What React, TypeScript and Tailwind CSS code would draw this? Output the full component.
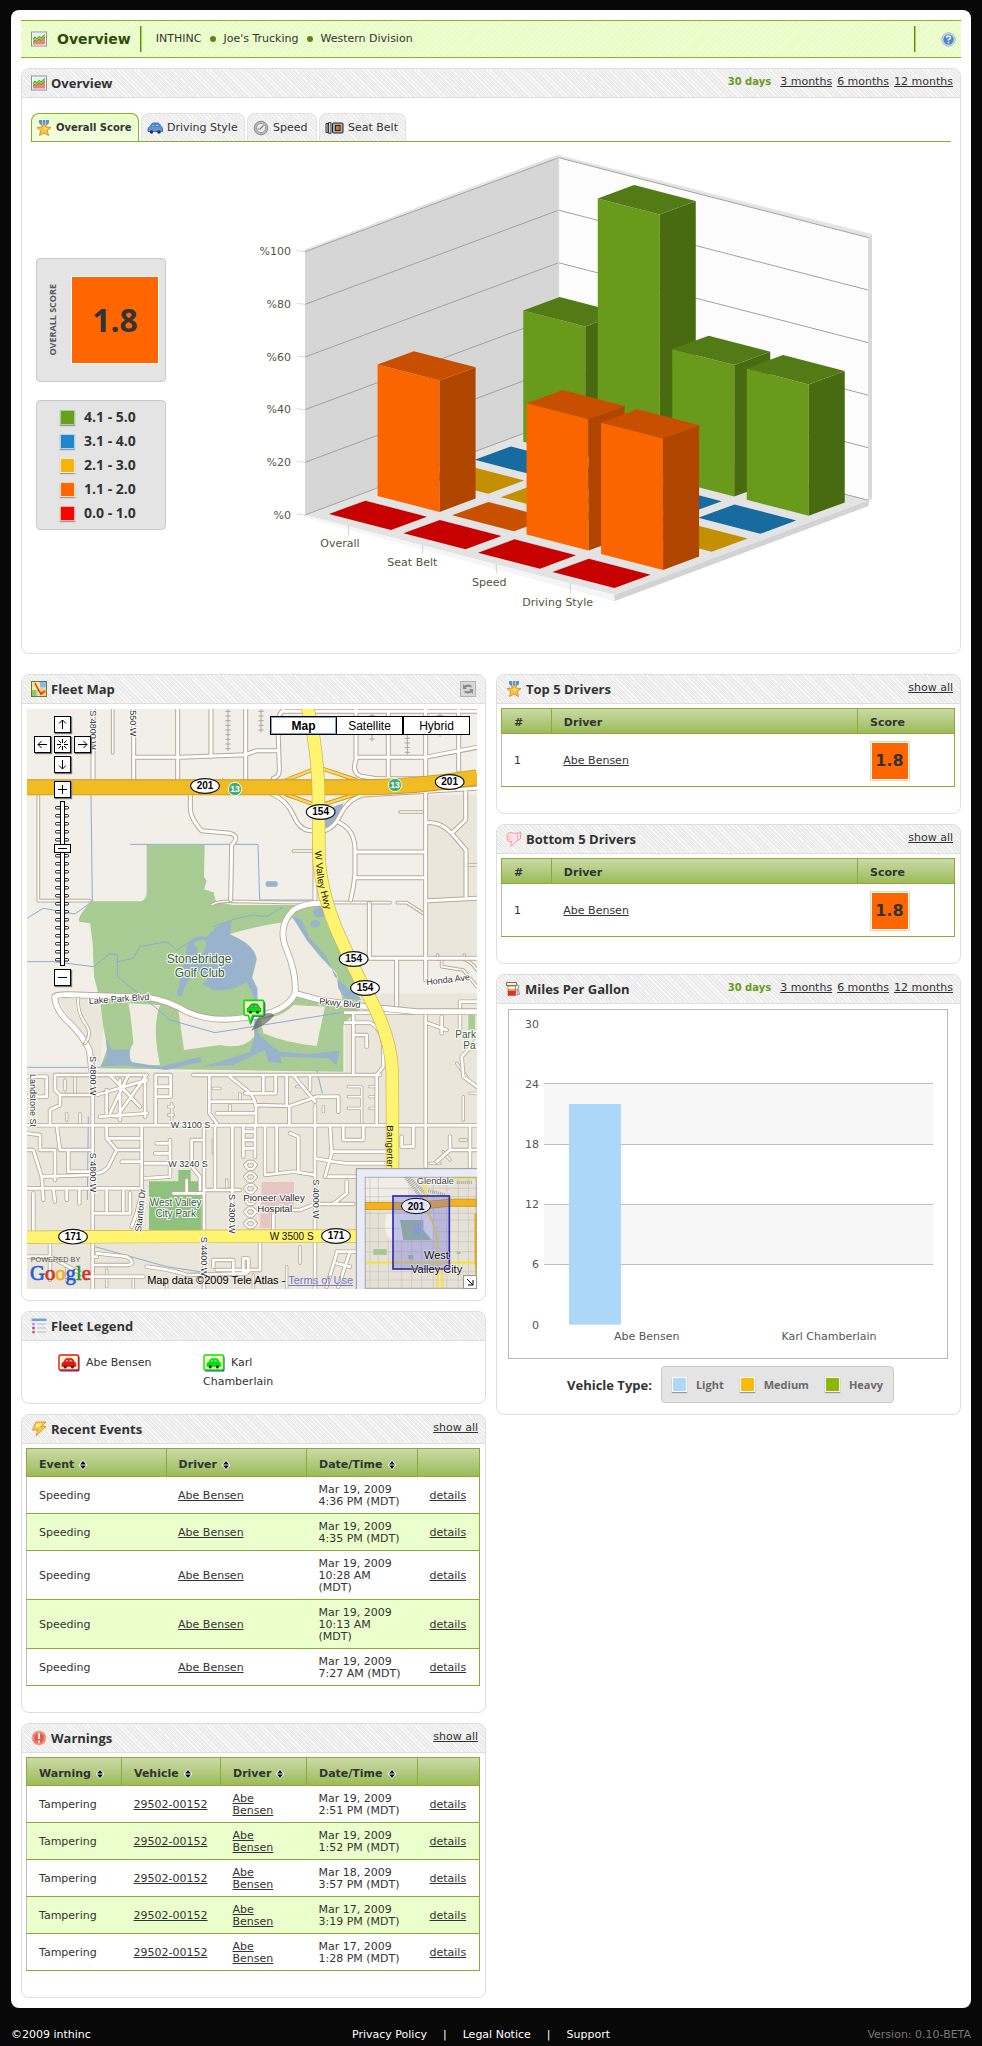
import React from 'react';

/* ---------- icons ---------- */

const TrendIcon = () => (
  <svg width="16" height="16" viewBox="0 0 16 16" aria-hidden="true" className="shrink-0">
    <rect x="0.5" y="1" width="15" height="14" fill="#fff" stroke="#8f8f8f" />
    <rect x="2" y="2.5" width="12" height="11" fill="#dff0fb" />
    <path d="M2 11L4 8.5 6 10 8 7.500 10 9 14 5V13.500H2Z" fill="#f08080" />
    <path d="M2 7.500L4 5.500 6 7 8 5 10 6 14 3V6L10 10 8 8.500 6 11 4 9.500 2 11.500Z" fill="#a9d65c" />
    <path d="M2 8.500L4 6 6 8 8 5.500 10 7 14 3.500M2 11L4 9 6 10.500 8 8 10 9.500 14 6" fill="none" stroke="#5b9a1c" />
  </svg>
);

const MedalIcon = () => (
  <svg width="16" height="16" viewBox="0 0 16 16" aria-hidden="true" className="shrink-0">
    <path d="M3 0h10v3L9.500 6.500h-3L3 3Z" fill="#5b93cf" />
    <path d="M6 0h1v6H6zM9 0h1v6H9z" fill="#b4d2ef" />
    <path d="M8 3l1.900 4L15 7.500 11.300 10.500 12.500 15.500 8 13 3.500 15.500 4.700 10.500 1 7.500 6.100 7Z" fill="#fbc34b" stroke="#d98a1c" strokeWidth="0.900" />
    <path d="M8 5.500l1 2.600 2.500.4L8 10Z" fill="#ffe9a0" />
  </svg>
);

const CarShape = ({ fill, dark }: { fill: string; dark: string }) => (
  <g>
    <path d="M1 8q0-2 2-2.300L4.500 3q.5-1 2-1h4q1.300 0 2 1L14 5.700q1.500.3 1.500 2.300v2.500H1Z" fill={fill} stroke={dark} strokeWidth="0.800" />
    <path d="M4.500 5.500L5.500 3.500H7.500V5.500ZM8.500 3.500H11L12.300 5.500H8.500Z" fill="#8ed0ea" stroke={dark} strokeWidth="0.500" />
    <circle cx="4.500" cy="11" r="1.700" fill="#333" />
    <circle cx="12" cy="11" r="1.700" fill="#333" />
  </g>
);

const CarIcon = () => (
  <svg width="16" height="14" viewBox="0 0 16 14" aria-hidden="true" className="shrink-0">
    <CarShape fill="#5f97da" dark="#2d5d9c" />
  </svg>
);

const GaugeIcon = () => (
  <svg width="16" height="16" viewBox="0 0 16 16" aria-hidden="true" className="shrink-0">
    <circle cx="8" cy="8" r="6.800" fill="#b9b9b9" stroke="#8b8b8b" />
    <circle cx="8" cy="8" r="4.600" fill="#ececec" stroke="#9d9d9d" />
    <path d="M6.500 9.500L10.500 5.500M4.500 9H6" stroke="#7c7c7c" strokeWidth="1.200" />
  </svg>
);

const BeltIcon = () => (
  <svg width="19" height="12" viewBox="0 0 19 12" aria-hidden="true" className="shrink-0">
    <path d="M1 1.500h2v9H1zM3.500 .700h2.500v10.600H3.500z" fill="#d9d9d9" stroke="#333" />
    <rect x="7.500" y="1" width="10.500" height="10" rx="1" fill="#aaa" stroke="#222" />
    <rect x="10.500" y="3.500" width="4.500" height="5" fill="#e0701c" stroke="#222" />
  </svg>
);

const HelpIcon = () => (
  <svg width="15" height="15" viewBox="0 0 15 15" aria-hidden="true">
    <circle cx="7.500" cy="7.500" r="6.700" fill="#dbe7f5" stroke="#9db6d6" />
    <circle cx="7.500" cy="7.500" r="5.200" fill="#4f86c6" />
    <path d="M5.500 6q.1-2 2-2t2 1.800Q9.400 7 7.500 7.600V8.600M7.500 9.800v1.400" fill="none" stroke="#fff" strokeWidth="1.500" />
  </svg>
);

const MapIcon = () => (
  <svg width="16" height="16" viewBox="0 0 16 16" aria-hidden="true" className="shrink-0">
    <rect x="0.500" y="0.500" width="15" height="15" fill="#f6e58a" stroke="#5f7a4c" />
    <path d="M9 1h6v7h-6z" fill="#8fb8e8" />
    <path d="M1 9h6v6H1z" fill="#8fc46a" />
    <path d="M9 9l6-3v9H9z" fill="#f9cf5c" />
    <path d="M6 1V15M1 7H15" stroke="#fff" strokeWidth="0.700" />
    <path d="M4 2L7 8 10 13 14 10" fill="none" stroke="#dd3b22" strokeWidth="1.600" />
  </svg>
);

const RefreshIcon = () => (
  <svg width="16" height="16" viewBox="0 0 16 16" aria-hidden="true">
    <rect x="0.500" y="0.500" width="15" height="15" fill="#d8d8d8" stroke="#b4b4b4" />
    <path d="M3 3v5h4L5.500 6.500q3-1.500 6 0V4.500Q8 2.500 4.500 4.500Z" fill="#8b8b8b" />
    <path d="M13 13V8H9l1.500 1.500q-3 1.500-6 0v2q3.500 2 7 0Z" fill="#8b8b8b" />
  </svg>
);

const ThumbDownIcon = () => (
  <svg width="16" height="16" viewBox="0 0 16 16" aria-hidden="true" className="shrink-0">
    <path d="M1 3.500Q2.500 1.500 5 1.500L10 2.500 14.500 1V8L11.500 9.500 9 11.500 6 15Q4 15.500 4.500 13.500L6 10.500H3Q1 10 1.500 8 0.500 6 1 3.500Z" fill="#ffe3e7" stroke="#f59aa7" />
    <path d="M1.500 5.500H4.500M1.500 8H5M11.500 2V9" stroke="#f6a3ae" strokeWidth="0.800" />
  </svg>
);

const GasIcon = () => (
  <svg width="15" height="16" viewBox="0 0 15 16" aria-hidden="true" className="shrink-0">
    <path d="M0.500 1.500h10v3h-10z" fill="#f8efc4" stroke="#6b6350" strokeWidth="0.900" />
    <path d="M2 5h7.500v9.500H2z" fill="#fff" stroke="#8e6a62" strokeWidth="0.700" />
    <path d="M2 8h7.500v6.500H2z" fill="#e2301b" />
    <path d="M2.500 8h6.500v2H2.500z" fill="#ff9a3b" />
    <path d="M10.500 3L13 5.500 12 8 13.500 13 11 14V8" fill="none" stroke="#9a9a9a" strokeWidth="1.100" />
  </svg>
);

const ListIcon = () => (
  <svg width="16" height="16" viewBox="0 0 16 16" aria-hidden="true" className="shrink-0">
    <rect x="0.500" y="0.500" width="15" height="2.500" fill="#6ea3dc" />
    <circle cx="2.500" cy="6" r="1.500" fill="#e77ae2" />
    <circle cx="2.500" cy="10" r="1.500" fill="#8a5be0" />
    <circle cx="2.500" cy="14" r="1.500" fill="#e8574e" />
    <path d="M6 6h9M6 10h9M6 14h9" stroke="#b0b0b0" strokeWidth="0.800" />
  </svg>
);

const BoltIcon = () => (
  <svg width="16" height="16" viewBox="0 0 16 16" aria-hidden="true" className="shrink-0">
    <path d="M5 1h10L10.500 5.500H15L5 15 7 9H1.500Z" fill="#fbc640" stroke="#d9932a" strokeWidth="0.900" />
    <path d="M6 2.500h5L8 6H4Z" fill="#ffe9a6" />
  </svg>
);

const AlertIcon = () => (
  <svg width="16" height="16" viewBox="0 0 16 16" aria-hidden="true" className="shrink-0">
    <circle cx="8" cy="8" r="6.900" fill="#e9594a" stroke="#f0a79c" />
    <circle cx="8" cy="8" r="5.500" fill="none" stroke="#f9c0b6" strokeWidth="0.700" />
    <path d="M8 3.500v5.500M8 10.500v2" stroke="#fff" strokeWidth="2" />
  </svg>
);

const SortIcon = () => (
  <svg width="8" height="10" viewBox="0 0 8 10" aria-hidden="true">
    <path d="M4 0L8 4.600V5.400L4 10L0 5.400V4.600Z" fill="#fff" />
    <path d="M4 1L7 4.500H1ZM4 9L1 5.500H7Z" fill="#000" />
  </svg>
);

const VehicleBadge = ({ color }: { color: string }) => (
  <svg width="22" height="18" viewBox="0 0 22 18" aria-hidden="true" className="inline-block align-middle">
    <rect x="1.500" y="2" width="20" height="15.500" rx="1.500" fill="#3a35a8" />
    <rect x="1" y="1" width="19.500" height="15" rx="1.500" fill="#ffffcf" stroke={color} strokeWidth="1.400" />
    <g transform="translate(3 2.500) scale(.95)">
      <CarShape fill={color} dark={color} />
    </g>
  </svg>
);

/* ---------- shared pieces ---------- */

const link = 'text-[#333] underline';

function Panel({ icon, title, aside, children }: { icon: React.ReactNode; title: string; aside?: React.ReactNode; children: React.ReactNode }) {
  return (
    <section className="overflow-hidden rounded-lg border border-[#dedede] bg-white">
      <header className="flex h-[29px] items-center gap-1 border-b border-[#dedede] bg-[repeating-linear-gradient(45deg,#ececec_0px,#ececec_2px,#f8f8f8_2px,#f8f8f8_3px)] pr-[7px] pl-[9px]">
        {icon}
        <h2 className="flex-1 font-['Open_Sans',sans-serif] text-[13px] font-bold text-[#333]">{title}</h2>
        {aside}
      </header>
      {children}
    </section>
  );
}

const Periods = () => (
  <nav className="flex items-center gap-[5px] pb-0.5">
    <span className="mr-1 text-[10px] font-bold text-[#6a9a1b]">30 days</span>
    <a href="#3" className={link}>3 months</a>
    <a href="#6" className={link}>6 months</a>
    <a href="#12" className={link}>12 months</a>
  </nav>
);

const ShowAll = () => (
  <a href="#all" className={'pb-0.5 ' + link}>show all</a>
);

type Column = { label: string; width: string; sort?: boolean };

function DataTable({ columns, rows, headClass }: { columns: Column[]; rows: React.ReactNode[][]; headClass: string }) {
  return (
    <div className="pt-1 pr-[5px] pb-[26px] pl-1">
      <table className="w-full table-fixed border-collapse border border-[#8aab35] border-l-[#bbb]">
        <thead>
          <tr className={'bg-linear-to-b from-[#cbdaa6] to-[#9aba54] ' + headClass}>
            {columns.map((c, i) => (
              <th key={i} className={'border border-[#8aab35] px-[12px] pt-1 text-left font-bold text-[#333] ' + c.width}>
                {c.sort ? (
                  <button type="button" className="flex items-center gap-[5px] font-bold">
                    {c.label}
                    <SortIcon />
                  </button>
                ) : (
                  c.label
                )}
              </th>
            ))}
          </tr>
        </thead>
        <tbody>
          {rows.map((r, i) => (
            <tr key={i} className="border-b border-[#8aab35] even:bg-[#eaffcb]">
              {r.map((cell, j) => (
                <td key={j} className="px-[12px] pt-[7px] pb-[5px] leading-[12px]">{cell}</td>
              ))}
            </tr>
          ))}
        </tbody>
      </table>
    </div>
  );
}

const ScoreBadge = () => (
  <div className="flex size-[40px] items-center justify-center border border-[#ffcfa6] bg-white p-px">
    <span className="flex size-full items-center justify-center bg-[#ff6600] text-[16px] font-bold">1.8</span>
  </div>
);

const A = ({ children }: { children: React.ReactNode }) => <a href="#item" className={link}>{children}</a>;

/* ---------- overall score chart ---------- */

const palette = {
  green: ['#6a9a1b', '#527a15', '#486b12'],
  orange: ['#fb6500', '#c94f00', '#b04500'],
};
const flat = ['#c90000', '#c85000', '#c48f00', '#186b9f'];
const bars: Record<string, [keyof typeof palette, number]> = {
  '0-1': ['orange', 394],
  '2-1': ['orange', 394],
  '3-1': ['orange', 394],
  '0-4': ['green', 394],
  '1-4': ['green', 788],
  '2-4': ['green', 394],
  '3-4': ['green', 394],
};

function ScoreChart() {
  const shapes: React.ReactNode[] = [];
  for (let r = 4; r >= 0; r--) {
    for (let c = 0; c < 4; c++) {
      const x = 987 + 223.5 * c + 145.7 * r;
      const y = 1092 + 58 * c - 54.2 * r;
      const bar = bars[`${c}-${r}`];
      const h = bar ? bar[1] : 0;
      const top = `M${x} ${y - h}l109 -40l185 48l-108 40Z`;
      if (!bar) {
        shapes.push(<path key={`${c}${r}`} d={top} fill={flat[r]} />);
        continue;
      }
      const [front, lid, side] = palette[bar[0]];
      shapes.push(
        <g key={`${c}${r}`}>
          <path d={`M${x} ${y - h}l186 48v${h}l-186 -48Z`} fill={front} />
          <path d={`M${x + 186} ${y - h + 48}l108 -40v${h}l-108 40Z`} fill={side} />
          <path d={top} fill={lid} />
        </g>
      );
    }
  }
  const steps = [0, 1, 2, 3, 4, 5];
  return (
    <svg viewBox="750 0 1890 1470" className="h-[490px] w-[630px] max-w-full" role="img" aria-label="Score distribution by category">
      <path d="M915 298L1672 14L2616 252L2606 263L1676 23L915 305Z" fill="#e4e4e4" />
      <path d="M915 305L1676 23V811L915 1095Z" fill="#d6d6d6" />
      <path d="M1676 23L2606 263V1051L1676 811Z" fill="#fcfcfc" />
      <path d="M2606 263L2616 252V1048L2606 1051Z" fill="#d9d9d9" />
      <path d="M915 1095L1676 811L2606 1051L1843 1335Z" fill="#e3e3e3" />
      <path d="M915 1095L1843 1335V1354L915 1103Z" fill="#f5f5f5" />
      <path d="M1843 1335L2606 1051V1068L1843 1354Z" fill="#d3d3d3" />
      {steps.map((i) => (
        <g key={i} fill="none">
          <path d={`M915 ${305 + 158 * i}L1676 ${23 + 157.600 * i}L2606 ${263 + 157.600 * i}`} stroke="#a2a29c" strokeWidth="3" />
          <path d={`M890 ${302 + 158 * i}L915 ${305 + 158 * i}`} stroke="#ddd" strokeWidth="3" />
        </g>
      ))}
      <path d="M1676 23V811M2606 263V1051" stroke="#d9d9d9" strokeWidth="3" />
      {shapes}
      <path d="M1046 1127V1155M1268 1185V1211M1489 1243V1270M1711 1301V1328" stroke="#d0d0d0" strokeWidth="3" />
      <g fontFamily="DejaVu Sans, sans-serif" fontSize="33" fill="#55553f">
        {steps.map((i) => (
          <text key={i} x="873" y={316 + 158 * i} textAnchor="end">{`%${100 - i * 20}`}</text>
        ))}
        <g textAnchor="middle">
          <text x="1020" y="1192">Overall</text>
          <text x="1237" y="1249">Seat Belt</text>
          <text x="1468" y="1309">Speed</text>
          <text x="1673" y="1367">Driving Style</text>
        </g>
      </g>
    </svg>
  );
}

const legend: [string, string, string][] = [
  ['4.1 - 5.0', 'bg-[#6a9f1b]', 'border-[#9fd3a0]'],
  ['3.1 - 4.0', 'bg-[#1e88cc]', 'border-[#a9d4f2]'],
  ['2.1 - 3.0', 'bg-[#f7b307]', 'border-[#fdf0c0]'],
  ['1.1 - 2.0', 'bg-[#ff6600]', 'border-[#ffdcc0]'],
  ['0.0 - 1.0', 'bg-[#ff0000]', 'border-[#f5b5a0]'],
];

const idleTab = 'flex items-center gap-1 rounded-t-lg border border-b-0 border-[#e2e2e2] bg-[repeating-linear-gradient(45deg,#ececec_0px,#ececec_2px,#f8f8f8_2px,#f8f8f8_3px)] px-[5px]';

function OverviewPanel() {
  return (
    <Panel icon={<TrendIcon />} title="Overview" aside={<Periods />}>
      <div className="px-[9px] pt-[15px]">
        <div role="tablist" className="flex h-[29px] items-stretch gap-0.5 border-b border-[#86b12d]">
          <button role="tab" aria-selected="true" type="button" className="flex w-[108px] items-center gap-1 rounded-t-lg border border-b-0 border-[#86b12d] bg-linear-to-b from-[#e9ffc8] to-[#f3ffe0] pl-1 text-[10px] font-bold">
            <MedalIcon />Overall Score
          </button>
          <button role="tab" type="button" className={'w-[104px] ' + idleTab}><CarIcon />Driving Style</button>
          <button role="tab" type="button" className={'w-[70px] ' + idleTab}><GaugeIcon />Speed</button>
          <button role="tab" type="button" className={'w-[87px] ' + idleTab}><BeltIcon />Seat Belt</button>
        </div>
      </div>
      <div className="flex items-start pt-2 pb-[13px] pl-[14px]">
        <div className="flex w-[130px] shrink-0 flex-col gap-[18px] pt-[108px]">
          <div className="flex h-[124px] items-center justify-between rounded border border-[#c9c9c9] bg-[#e4e4e4] pr-1.5 pl-[9px]">
            <span className="rotate-180 font-['Open_Sans',sans-serif] text-[9px] font-bold text-[#5a5a5a] [writing-mode:vertical-rl]">OVERALL SCORE</span>
            <span className="flex size-[88px] items-center justify-center border border-white bg-[#ff6600] font-['Open_Sans',sans-serif] text-[32px] font-bold">1.8</span>
          </div>
          <ul className="flex flex-col rounded border border-[#c9c9c9] bg-[#e4e4e4] py-1 pl-[23px]">
            {legend.map(([label, bg, edge]) => (
              <li key={label} className="flex h-6 items-center gap-[9px] font-['Open_Sans',sans-serif] text-[14px] font-bold">
                <span className={'size-[15px] border shadow-[0_1px_1px_#999] ' + bg + ' ' + edge} />
                {label}
              </li>
            ))}
          </ul>
        </div>
        <div className="flex flex-1 pl-[84px]"><ScoreChart /></div>
      </div>
    </Panel>
  );
}

/* ---------- fleet map ---------- */

function Roads({ paths, outer = 15, inner = 9 }: { paths: string[]; outer?: number; inner?: number }) {
  const d = paths.join('');
  return (
    <g fill="none" strokeLinecap="round" strokeLinejoin="round">
      <path d={d} stroke="#b7a994" strokeWidth={outer} />
      <path d={d} stroke="#fff" strokeWidth={inner} />
    </g>
  );
}

const northRoads = [
  'M279 147V360', 'M401 147V360', 'M533 147V360', 'M633 147V290', 'M737 147V360', 'M405 292H540L640 288L737 284L770 272H835',
  'M850 150Q832 165 834 200L838 330Q838 350 820 355', 'M850 154H1060', 'M1068 147V300Q1055 335 1080 348L1130 356H1275', 'M1165 154V352', 'M1277 147V960',
  'M1376 147V330', 'M1068 154H1431', 'M1068 292H1275L1431 262', 'M571 405V450Q575 480 605 512L690 520Q722 528 695 555L692 720',
  'M815 402Q860 420 880 465Q900 515 940 512H975Q1005 500 1018 470Q1045 415 1090 405L1431 385', 'M1018 488Q1065 510 1065 570V640Q1062 680 1052 720',
  'M1068 576H1275', 'M1068 653H1275', 'M945 512V725', 'M1108 730V895H1431', 'M1190 900V1055', 'M1283 488Q1320 485 1355 520L1398 570V715', 'M1355 520L1397 480V395', 'M1283 722L1431 715',
];
const northLanes = [
  'M338 147V278', 'M115 405V722H270', 'M880 573H935', 'M1200 456H1270', 'M1192 728H1220L1270 760', 'M1398 615H1431', 'M636 734Q655 722 700 724L850 727L1170 728',
  'M1313 885V897M1393 885V897M1325 900V920L1390 930L1431 980', 'M1390 897Q1415 905 1431 930',
];
const parkRoads = [
  'M275 1230L268 1170Q250 1130 210 1090Q165 1050 164 1010Q166 1003 210 1004L440 1012Q500 1020 560 1055Q640 1090 740 1072Q860 1060 885 1000Q890 940 860 870Q830 800 880 750Q920 725 990 730',
  'M885 1000L960 1020L1100 1040L1250 1055H1431',
];

const southRoads = [
  'M81 436H1431', 'M278 230V927', 'M425 436V640L410 700L395 740', 'M612 436V927', 'M697 436V750', 'M945 380V927', 'M1277 100V436V560', 'M1060 98V285', 'M580 285H1140',
  'M628 285V400L650 430', 'M690 290L740 330Q765 350 768 380V436', 'M790 285V340M827 285V340H735', 'M880 285L945 365M930 290V330', 'M860 285V375', 'M768 375L870 378L950 350H1015V395',
  'M635 365H760M650 400H765', 'M868 378V436', 'M1035 128H1110Q1145 145 1150 200V260L1130 285V436', 'M1060 165H1100V200', 'M1035 98H1431',
  'M165 285H435V410', 'M165 285V330L180 345H275M180 345V375L150 390V436', 'M81 290H140V350H81', 'M290 345L440 300M300 410L440 400M330 285L420 380M385 285L330 400M440 285L350 410', 'M320 330V400M360 300V420',
  'M467 285V436M467 285H512V350H467', 'M467 320H505', 'M81 460L120 465V510H165V600', 'M81 510H100L125 590L275 585', 'M170 436L180 510H278', 'M205 510V575H275', 'M320 436V475L350 510H425', 'M320 475H425', 'M350 510L325 560Q310 580 285 580', 'M365 545H425', 'M435 550H510M510 480V590L435 595', 'M470 490H510M465 520H510',
  'M645 436V630H612M645 630H720', 'M795 436V585L880 575L945 585', 'M830 436V580', 'M870 460L895 470V575', 'M795 520V560', 'M1030 436V480H1090V436', 'M990 436L995 520L975 590M945 535L1000 545L1040 550H1160M995 515H1160', 'M985 590H1070M1040 605V640L1000 672', 'M945 672H1060M945 672L900 690H820V750',
  'M1205 470V500H1240V436M1350 470V510L1310 545M1350 510H1431M1410 436V560', 'M81 625H425M125 590L130 660M160 625L165 665M200 625V660M238 625V670', 'M320 625V700M370 625V700M285 700H390V640', 'M730 436V530M765 436V530M730 455H765M730 480H765M730 505H765',
  'M290 820L380 830Q410 850 385 855H278M81 830H150V790M150 900V830L260 890H430', 'M440 860Q520 870 560 885L740 880M640 860V840H700V885', 'M780 785V870H650', 'M730 835H745V875H730Z', 'M1010 820L980 920M1050 815L1015 920M1010 815H1068M1010 850L1050 860',
  'M1380 100V65H1431M1380 150V98M1431 180L1385 230L1390 290L1431 320M1285 130L1340 150M1325 110V160', 'M575 480V560L600 590V630M575 480H612', 'M520 640H605M560 600V640', 'M100 640V755M278 830H290',
];
const southLanes = [
  'M1045 320H1085V430M1045 350H1085M1045 385H1085M1045 320M1130 320H1110M1130 350H1110M1130 385H1110', 'M640 325H660M720 360V340M690 400V375M970 380V395M890 320H910', 'M515 370V430M505 380H520M505 405H520', 'M225 345V290M195 300V330M240 400V436M200 400V420',
  'M680 600V630M640 480V520M1380 480H1400M1290 550H1320M1330 515L1350 540', 'M1390 350V420M1410 340H1431M1370 250L1400 290', 'M200 860V905M320 870V920M400 890V927M500 900V927M760 885V927M860 860V925M900 800V850',
];

function Shield({ x, y, n }: { x: number; y: number; n: string }) {
  return (
    <g>
      <ellipse cx={x} cy={y} rx="43" ry="22" fill="#fff" stroke="#111" strokeWidth="3.500" />
      <text x={x} y={y + 10} textAnchor="middle" fontSize="30" fontWeight="bold" fill="#000">{n}</text>
    </g>
  );
}

function MapArt() {
  const rail = (x: number, y: number, n: number) => (
    <path key={x} d={`M${x} ${y}v${n * 14}` + Array.from({ length: n }, (_, i) => `M${x - 8} ${y + 7 + i * 14}h16`).join('')} stroke="#a8a8a8" strokeWidth="3" />
  );
  return (
    <svg viewBox="81 147 1350 1740" preserveAspectRatio="xMidYMid slice" className="block size-full" role="img" aria-label="Street map of West Valley City">
      <rect x="81" y="147" width="1350" height="1740" fill="#f2efe9" />
      <path d="M81 1235H1431V1887H81ZM1285 405H1431V885H1285ZM1035 1065H1431V1240H1035ZM170 1010H320L300 1225L270 1170ZM1120 1000H1431V1060H1120Z" fill="#ebe6dc" />
      <path d="M440 555H614L612 650L620 662L612 688L640 697L648 725L700 735H960L985 800L1030 900L1060 960L1090 1040L1030 1090V1235L300 1225L322 1165L310 1100L300 1020L282 950L278 850L270 790L238 785Q230 770 275 724H424Q440 715 440 700Z" fill="#a8cc93" />
      <g fill="#f0ece4">
        <path d="M690 822Q760 800 850 787C830 840 885 930 875 1000Q870 1050 775 1065L755 960L770 900Q750 850 690 822Z" />
        <path d="M880 770L905 790L920 840L960 890L1010 940L1030 1030L890 1000C900 900 830 850 860 790Z" />
        <path d="M385 1030L480 1035Q455 1100 480 1215H405Q375 1190 400 1150Q395 1080 385 1030Z" />
        <path d="M535 1050Q600 1085 680 1085L762 1066V1130Q730 1170 660 1155L552 1170Q545 1120 535 1050Z" />
        <path d="M782 1078Q850 1070 880 1035L975 1040L950 1158Q860 1150 790 1120Z" />
      </g>
      <g fill="#99b3cc">
        <path d="M650 800L695 780L690 825Q760 850 770 895L755 950L772 985L775 1120L805 1150L840 1175L930 1182L1018 1172L1010 1215L985 1195L840 1190L845 1210L805 1205L795 1170L700 1215L605 1220L660 1205L750 1175L765 1130L762 1010L740 965Q700 995 640 990L607 973L625 955L600 935Q560 950 545 1010L530 1005L555 900L562 850Q590 820 620 832Z" />
        <path d="M875 768L905 780L930 835L980 890L1005 950L1060 1000L1085 1020L1035 1015L1015 985L1010 945L960 885L920 840Z" />
        <ellipse cx="960" cy="757" rx="20" ry="15" />
        <ellipse cx="946" cy="791" rx="14" ry="11" />
        <path d="M318 1135L335 1170L388 1168L390 1205L480 1220L600 1190L605 1205L500 1230L370 1215L300 1220L322 1190Z" />
        <rect x="797" y="664" width="36" height="16" rx="5" />
        <path d="M1000 440L1030 430L1015 480Q1000 505 975 500V460Z" />
      </g>
      <path d="M580 852Q605 830 618 845Q620 880 592 892Q600 865 580 852Z" fill="#a8cc93" />
      <g fill="none" stroke="#8cacd2" strokeWidth="3">
        <path d="M273 405L277 724L225 762L130 745L81 775M390 553H774L779 720H945M81 905H160L280 920L330 880L352 885V950L440 1020L510 1080L645 1118L1028 1057M352 905L400 895L420 860L500 845L530 870L580 840M640 800L710 775L760 765L800 770L850 740M81 1222H300M950 1230L967 1300M265 1370L262 1620M285 1760L500 1820L700 1850" />
      </g>
      <Roads paths={northLanes} outer={11} inner={5} />
      <Roads paths={northRoads} />
      <g fill="none">{[rail(684, 147, 9), rail(783, 147, 5), rail(1116, 160, 6), rail(1222, 200, 6), rail(1320, 160, 5)]}</g>
      <g transform="translate(0 960)">
        <path d="M447 604H535V570H572V604H605V750H447Z" fill="#8fc27f" />
        <path d="M785 606H882V680H812V745H780Z" fill="#e6c6c3" />
        <path d="M1405 105H1425V150H1405Z" fill="#a8cc93" />
        <Roads paths={southLanes} outer={10} inner={5} />
        <Roads paths={southRoads} outer={13} inner={8} />
        {[555, 590, 625, 660, 695, 730].map((y) => (
          <Roads key={y} paths={[`M735 ${y}L745 ${y - 10}H758L768 ${y}L758 ${y + 12}H745Z`]} outer={11} inner={6} />
        ))}
      </g>
      <Roads paths={parkRoads} outer={20} inner={15} />
      <Roads paths={['M235 1015Q230 1060 262 1100Q275 1125 255 1150']} outer={11} inner={6} />
      <g fill="none">
        <path d="M855 362L955 322L1070 360M855 402L955 438L1070 402" stroke="#c69629" strokeWidth="12" />
        <path d="M855 362L955 322L1070 360M855 402L955 438L1070 402" stroke="#ffd75c" strokeWidth="7" />
        <path d="M81 382H1100Q1250 380 1431 352" stroke="#c69629" strokeWidth="48" />
        <path d="M81 382H1100Q1250 380 1431 352" stroke="#f1bb22" strokeWidth="43" />
        <path d="M922 140Q950 250 955 380L957 600Q965 700 1010 810Q1050 900 1090 980Q1175 1120 1177 1240L1178 1730M81 1732Q400 1728 1431 1728" stroke="#c4b455" strokeWidth="40" />
        <path d="M922 140Q950 250 955 380L957 600Q965 700 1010 810Q1050 900 1090 980Q1175 1120 1177 1240L1178 1730M81 1732Q400 1728 1431 1728" stroke="#fff46f" strokeWidth="36" />
      </g>
      <g fontFamily="Liberation Sans, Arial, sans-serif" fontSize="27" fill="#333" stroke="#fff" strokeWidth="6" strokeLinejoin="round" style={{ paintOrder: 'stroke' }}>
        <text transform="translate(269 151) rotate(90)">S 4800 W</text>
        <text transform="translate(391 151) rotate(90)">550 W</text>
        <text transform="translate(269 1188) rotate(90)">S 4800 W</text>
        <text transform="translate(270 1478) rotate(90)">S 4800 W</text>
        <text transform="translate(90 1242) rotate(90)">Landstone St</text>
        <text transform="translate(602 1730) rotate(90)">S 4400 W</text>
        <text transform="translate(687 1602) rotate(90)">S 4300 W</text>
        <text transform="translate(938 1558) rotate(90)">S 4000 W</text>
        <text transform="translate(423 1716) rotate(-84)">Stanton Dr</text>
        <text x="512" y="1405">W 3100 S</text>
        <text x="505" y="1520">W 3240 S</text>
        <text transform="translate(267 1032) rotate(-4)">Lake Park Blvd</text>
        <text transform="translate(957 1033) rotate(5)">Pkwy Blvd</text>
        <text transform="translate(1280 976) rotate(-7)">Honda Ave</text>
        <g fill="#2f5a30" fontSize="36" textAnchor="middle">
          <text x="597" y="909">Stonebridge</text>
          <text x="599" y="951">Golf Club</text>
          <g fontSize="30">
            <text x="527" y="1638">West Valley</text>
            <text x="527" y="1670">City Park</text>
          </g>
        </g>
        <g fill="#2f5a30" fontSize="30">
          <text x="1366" y="1134">Park</text>
          <text x="1390" y="1166">Pa</text>
        </g>
        <g fill="#222" fontSize="29" textAnchor="middle">
          <text x="822" y="1623">Pioneer Valley</text>
          <text x="824" y="1656">Hospital</text>
        </g>
      </g>
      <g fontFamily="Liberation Sans, Arial, sans-serif" fill="#111">
        <text x="809" y="1739" fontSize="30">W 3500 S</text>
        <text transform="translate(944 574) rotate(84)" fontSize="29">W Val</text>
        <text transform="translate(950 652) rotate(75)" fontSize="29">ley Hwy</text>
        <text transform="translate(1162 1396) rotate(90)" fontSize="29">Bangerter</text>
        <Shield x={615} y={378} n="201" />
        <Shield x={1349} y={366} n="201" />
        <Shield x={962} y={456} n="154" />
        <Shield x={1061} y={897} n="154" />
        <Shield x={1095} y={984} n="154" />
        <Shield x={219} y={1730} n="171" />
        <Shield x={1008} y={1728} n="171" />
        {[[705, 387], [1185, 375]].map(([x, y]) => (
          <g key={x}>
            <circle cx={x} cy={y} r="20" fill="#3fae74" stroke="#fff" strokeWidth="3" />
            <text x={x} y={y + 9} textAnchor="middle" fontSize="26" fontWeight="bold" fill="#fff">13</text>
          </g>
        ))}
      </g>
      <g>
        <path d="M754 1112L775 1072Q810 1050 823 1066Q800 1095 754 1112Z" fill="#555" opacity="0.600" />
        <path d="M737 1024H792L796 1030V1064L790 1070H762L754 1092L748 1068H737Z" fill="#3a35a8" />
        <path d="M735 1021H788Q791 1021 791 1025V1062Q791 1066 788 1066H758L751 1088L745 1066H735Q732 1066 732 1062V1025Q732 1021 735 1021Z" fill="#ffffcf" stroke="#00e600" strokeWidth="5" />
        <g transform="translate(739 1026) scale(2.800)">
          <CarShape fill="#00e600" dark="#067a06" />
        </g>
      </g>
      <g fontFamily="Liberation Sans, Arial, sans-serif">
        <text x="92" y="1806" fontSize="22" fill="#555">POWERED BY</text>
        <text x="90" y="1860" fontFamily="Liberation Serif, serif" fontSize="62" strokeWidth="2">
          <tspan fill="#2a5bd7" stroke="#2a5bd7">G</tspan><tspan fill="#d9301f" stroke="#d9301f">o</tspan><tspan fill="#eeb211" stroke="#eeb211">o</tspan><tspan fill="#2a5bd7" stroke="#2a5bd7">g</tspan><tspan fill="#1f9a3a" stroke="#1f9a3a">l</tspan><tspan fill="#d9301f" stroke="#d9301f">e</tspan>
        </text>
      </g>
      <g transform="translate(0 960)" fontFamily="Liberation Sans, Arial, sans-serif">
        <rect x="1069" y="566" width="370" height="370" fill="#e8ecf8" stroke="#979797" strokeWidth="3" />
        <svg x="1094" y="590" width="336" height="336" viewBox="1094 590 336 336">
          <rect x="1094" y="590" width="336" height="336" fill="#e6e1d6" />
          <rect x="1094" y="590" width="130" height="70" fill="#f0ede6" />
          <path d="M1160 700H1300V780H1180Q1145 770 1160 700Z" fill="#f3f1ec" />
          <path d="M1200 720H1270V750L1295 780H1210ZM1120 808H1160V824H1120ZM1225 825H1240V838H1225ZM1370 815H1382V822H1370Z" fill="#9cc788" />
          <path d="M1240 735L1265 730V765L1285 770L1240 760Z" fill="#99b3cc" />
          <path d="M1110 590V925M1135 590V925M1165 780V925M1205 780V925M1235 780V925M1265 600V925M1300 590V925M1340 590V925M1375 590V925M1405 590V925M1094 625H1430M1094 650H1430M1094 700H1430M1094 745H1200M1094 785H1430M1094 815H1430M1094 875H1430M1094 900H1430M1300 720H1430M1300 755H1430" stroke="#c9c4ba" strokeWidth="2" />
          <path d="M1215 590L1270 660M1225 590L1285 650M1285 632L1335 645M1370 607H1415" stroke="#a6a6a6" strokeWidth="10" strokeDasharray="3 3" />
          <path d="M1270 590L1285 700Q1315 750 1312 800V925M1094 848H1430M1327 870V925M1360 594H1430" stroke="#f3e04f" strokeWidth="7" fill="none" />
          <path d="M1094 678H1250L1350 668H1430" fill="none" stroke="#c69629" strokeWidth="24" />
          <path d="M1094 678H1250L1350 668H1430" fill="none" stroke="#f5b21c" strokeWidth="19" />
          <path d="M1428 700V830L1434 925" stroke="#f5b21c" strokeWidth="10" fill="none" />
          <rect x="1179" y="648" width="169" height="219" fill="#6a6ae0" fillOpacity="0.350" stroke="#2d2db4" strokeWidth="5" />
          <g stroke="#fff" strokeWidth="5" strokeLinejoin="round" style={{ paintOrder: 'stroke' }}>
            <text x="1250" y="613" fontSize="28" fill="#444">Glendale</text>
            <text x="1272" y="838" fontSize="33" fill="#111" strokeOpacity="0.500">West</text>
            <text x="1233" y="878" fontSize="33" fill="#111" strokeOpacity="0.500">Valley City</text>
          </g>
          <ellipse cx="1248" cy="678" rx="44" ry="23" fill="#e4e6f7" stroke="#111" strokeWidth="3" />
          <text x="1248" y="689" textAnchor="middle" fontSize="30" fontWeight="bold">201</text>
          <rect x="1095" y="591" width="334" height="334" fill="none" stroke="#8d8d8d" strokeWidth="3" />
        </svg>
      </g>
    </svg>
  );
}

const controlButton = 'flex size-[17px] items-center justify-center border border-black bg-white shadow-[1px_1px_1px_#777]';
const Glyph = ({ d, label, area = '' }: { d: string; label: string; area?: string }) => (
  <button type="button" aria-label={label} className={controlButton + ' ' + area}>
    <svg width="11" height="11" viewBox="0 0 11 11" aria-hidden="true"><path d={d} fill="none" stroke="#000" /></svg>
  </button>
);

function FleetMap() {
  const ticks = Array.from({ length: 20 }, (_, i) => 6 + i * 8);
  return (
    <Panel icon={<MapIcon />} title="Fleet Map" aside={<button type="button" aria-label="Refresh map" className="mr-0.5"><RefreshIcon /></button>}>
      <div className="pt-[5px] pr-2 pb-[11px] pl-[5px]">
        <div className="relative h-[580px] overflow-hidden">
          <MapArt />
          <div className="absolute top-[7px] left-[7px] flex w-[57px] flex-col items-center">
            <div className="grid grid-cols-3 gap-[3px]">
              <Glyph label="Pan up" area="col-start-2" d="M5.500 10V1M2 4.500L5.500 1L9 4.500" />
              <Glyph label="Pan left" area="col-start-1" d="M10 5.500H1M4.500 2L1 5.500L4.500 9" />
              <Glyph label="Centre" d="M5.500 0V4M5.500 7V11M0 5.500H4M7 5.500H11M1.500 1.500L4 4M9.500 1.500L7 4M1.500 9.500L4 7M9.500 9.500L7 7" />
              <Glyph label="Pan right" d="M1 5.500H10M6.500 2L10 5.500L6.500 9" />
              <Glyph label="Pan down" area="col-start-2" d="M5.500 1V10M2 6.500L5.500 10L9 6.500" />
            </div>
            <div className="flex flex-col items-center pt-2">
              <Glyph label="Zoom in" d="M5.500 1V10M1 5.500H10" />
              <div className="relative my-[3px] h-[165px] w-[17px]">
                <svg width="17" height="165" viewBox="0 0 17 165" aria-hidden="true" className="block">
                  {ticks.map((y) => (
                    <rect key={y} x="1.500" y={y - 0.500} width="13" height="2.500" rx="1" fill="#fff" stroke="#000" strokeWidth="0.900" />
                  ))}
                  <rect x="6.500" y="0.500" width="4" height="164" fill="#fff" stroke="#000" />
                  <rect x="0.500" y="43.500" width="16" height="8" fill="#fff" stroke="#000" />
                  <path d="M4 47.500H13" stroke="#000" />
                </svg>
                <input type="range" aria-label="Zoom level" min="0" max="19" defaultValue="14" className="absolute inset-0 h-full w-full opacity-0 [writing-mode:vertical-lr]" />
              </div>
              <Glyph label="Zoom out" d="M1 5.500H10" />
            </div>
          </div>
          <div className="absolute top-[7px] right-[7px] flex font-['Liberation_Sans',Arial,sans-serif] text-[12px] text-black">
            <button type="button" className="h-[19px] w-[67px] border border-black bg-white font-bold shadow-[inset_0_0_0_1px_#7f9fd6]">Map</button>
            <button type="button" className="h-[19px] w-[66px] border border-l-0 border-black bg-white">Satellite</button>
            <button type="button" className="h-[19px] w-[67px] border border-black bg-white">Hybrid</button>
          </div>
          <p className="absolute right-[124px] bottom-0 font-['Liberation_Sans',Arial,sans-serif] text-[11px] leading-[17px] whitespace-nowrap text-black">
            Map data ©2009 Tele Atlas - <a href="#terms" className="text-[#7777cc] underline">Terms of Use</a>
          </p>
          <button type="button" aria-label="Hide overview map" className="absolute right-0 bottom-0 flex size-[14px] items-center justify-center border border-[#979797] bg-white">
            <svg width="8" height="8" viewBox="0 0 8 8" aria-hidden="true"><path d="M1 1L7 7M7 2V7H2" fill="none" stroke="#000" /></svg>
          </button>
        </div>
      </div>
    </Panel>
  );
}

/* ---------- miles per gallon ---------- */

function MpgPanel() {
  const labels: [string, number][] = [['30', 163], ['24', 343], ['18', 523], ['12', 704], ['6', 884], ['0', 1067]];
  const types: [string, string][] = [['Light', 'bg-[#add7f9]'], ['Medium', 'bg-[#f8bb0c]'], ['Heavy', 'bg-[#8cb800]']];
  return (
    <Panel icon={<GasIcon />} title="Miles Per Gallon" aside={<Periods />}>
      <div className="pt-[5px] pr-3 pb-[11px] pl-[11px]">
        <div className="border border-[#b9b9b9]">
          <svg viewBox="57 120 1314 1044" className="block h-[348px] w-full" role="img" aria-label="Miles per gallon by driver">
            <path d="M162 340H1329V523H162ZM162 703H1329V883H162Z" fill="#f7f7f7" />
            <path d="M162 340.500H1329M162 523.500H1329M162 703.500H1329M162 883.500H1329" stroke="#bdbdbd" strokeWidth="3" />
            <rect x="237" y="402" width="156" height="662" fill="#add7f9" />
            <g fontFamily="DejaVu Sans, sans-serif" fontSize="33" fill="#555">
              {labels.map(([t, y]) => (
                <text key={t} x="147" y={y + 11} textAnchor="end">{t}</text>
              ))}
              <text x="470" y="1111" textAnchor="middle">Abe Bensen</text>
              <text x="1017" y="1111" textAnchor="middle">Karl Chamberlain</text>
            </g>
          </svg>
        </div>
        <div className="flex items-center justify-center gap-[9px] pt-[7px] pr-1 pl-[9px] font-['Open_Sans',sans-serif]">
          <span className="text-[13px] font-bold">Vehicle Type:</span>
          <ul className="flex h-[37px] items-center gap-4 rounded border border-[#c9c9c9] bg-[#e4e4e4] px-[10px] text-[11px] font-bold text-[#6a6a6a]">
            {types.map(([t, bg]) => (
              <li key={t} className="flex items-center gap-[9px]">
                <span className={'size-[15px] border border-white shadow-[0_1px_1px_#999] ' + bg} />
                {t}
              </li>
            ))}
          </ul>
        </div>
      </div>
    </Panel>
  );
}

/* ---------- page ---------- */

const driverColumns: Column[] = [
  { label: '#', width: 'w-[11%]' },
  { label: 'Driver', width: '' },
  { label: 'Score', width: 'w-[97px]' },
];
const driverRows = [['1', <A>Abe Bensen</A>, <ScoreBadge />]];

const eventRows = ['4:36 PM', '4:35 PM', '10:28 AM', '10:13 AM', '7:27 AM'].map((t) => [
  'Speeding', <A>Abe Bensen</A>, `Mar 19, 2009 ${t} (MDT)`, <A>details</A>,
]);
const warningRows = [['19', '2:51'], ['19', '1:52'], ['18', '3:57'], ['17', '3:19'], ['17', '1:28']].map(([d, t]) => [
  'Tampering', <span className="whitespace-nowrap"><A>29502-00152</A></span>, <A>Abe Bensen</A>, `Mar ${d}, 2009 ${t} PM (MDT)`, <A>details</A>,
]);

const Divider = () => <span className="h-[26px] w-0.5 border-r border-[#a9cf55] bg-[#5d8a14]" />;
const Dot = () => <span className="size-1.5 rounded-full bg-[#5d8517]" />;

export default function App() {
  return (
    <div className="min-h-screen bg-[#080808] px-[11px] pt-[10px] font-['DejaVu_Sans',Verdana,sans-serif] text-[11px] leading-[14px] text-[#333]">
      <main className="rounded-lg bg-white p-[10px]">
        <div className="flex h-[38px] items-center border-y border-[#86b12d] bg-[repeating-linear-gradient(135deg,#e8fdc4_0px,#e8fdc4_3px,#f4ffe2_3px,#f4ffe2_4px)] pr-[5px] pl-[10px]">
          <TrendIcon />
          <h1 className="pr-[9px] pl-[10px] text-[14px] font-bold text-[#2f4a0a]">Overview</h1>
          <Divider />
          <nav className="flex flex-1 items-center gap-[7px] pl-[14px]">
            <span className="mr-0.5">INTHINC</span>
            <Dot />
            <span className="mr-0.5">Joe's Trucking</span>
            <Dot />
            <span>Western Division</span>
          </nav>
          <Divider />
          <button type="button" aria-label="Help" className="ml-[25px]"><HelpIcon /></button>
        </div>

        <div className="pt-[10px]"><OverviewPanel /></div>

        <div className="grid grid-cols-2 items-start gap-[10px] pt-5">
          <div className="flex flex-col gap-[10px]">
            <FleetMap />
            <Panel icon={<ListIcon />} title="Fleet Legend">
              <ul className="grid grid-cols-3 px-[14px] py-3 leading-[19px]">
                <li className="px-[22px]"><VehicleBadge color="#ee1111" /><span className="pl-1.5">Abe Bensen</span></li>
                <li className="px-[22px]"><VehicleBadge color="#00e600" /><span className="pl-1.5">Karl Chamberlain</span></li>
              </ul>
            </Panel>
            <Panel icon={<BoltIcon />} title="Recent Events" aside={<ShowAll />}>
              <DataTable
                headClass="h-[28px]"
                columns={[
                  { label: 'Event', width: '', sort: true },
                  { label: 'Driver', width: 'w-[31%]', sort: true },
                  { label: 'Date/Time', width: 'w-[111px]', sort: true },
                  { label: '', width: 'w-[62px]' },
                ]}
                rows={eventRows}
              />
            </Panel>
            <Panel icon={<AlertIcon />} title="Warnings" aside={<ShowAll />}>
              <DataTable
                headClass="h-[28px]"
                columns={[
                  { label: 'Warning', width: '', sort: true },
                  { label: 'Vehicle', width: 'w-[99px]', sort: true },
                  { label: 'Driver', width: 'w-[86px]', sort: true },
                  { label: 'Date/Time', width: 'w-[111px]', sort: true },
                  { label: '', width: 'w-[62px]' },
                ]}
                rows={warningRows}
              />
            </Panel>
          </div>
          <div className="flex flex-col gap-[10px]">
            <Panel icon={<MedalIcon />} title="Top 5 Drivers" aside={<ShowAll />}>
              <DataTable headClass="h-[25px]" columns={driverColumns} rows={driverRows} />
            </Panel>
            <Panel icon={<ThumbDownIcon />} title="Bottom 5 Drivers" aside={<ShowAll />}>
              <DataTable headClass="h-[25px]" columns={driverColumns} rows={driverRows} />
            </Panel>
            <MpgPanel />
          </div>
        </div>
      </main>
      <footer className="flex items-center pt-5 pb-1 text-white">
        <span className="flex-1">©2009 inthinc</span>
        <nav className="flex gap-4 pr-5">
          <a href="#privacy">Privacy Policy</a>
          <span>|</span>
          <a href="#legal">Legal Notice</a>
          <span>|</span>
          <a href="#support">Support</a>
        </nav>
        <span className="flex-1 text-right text-[#777]">Version: 0.10-BETA</span>
      </footer>
    </div>
  );
}
